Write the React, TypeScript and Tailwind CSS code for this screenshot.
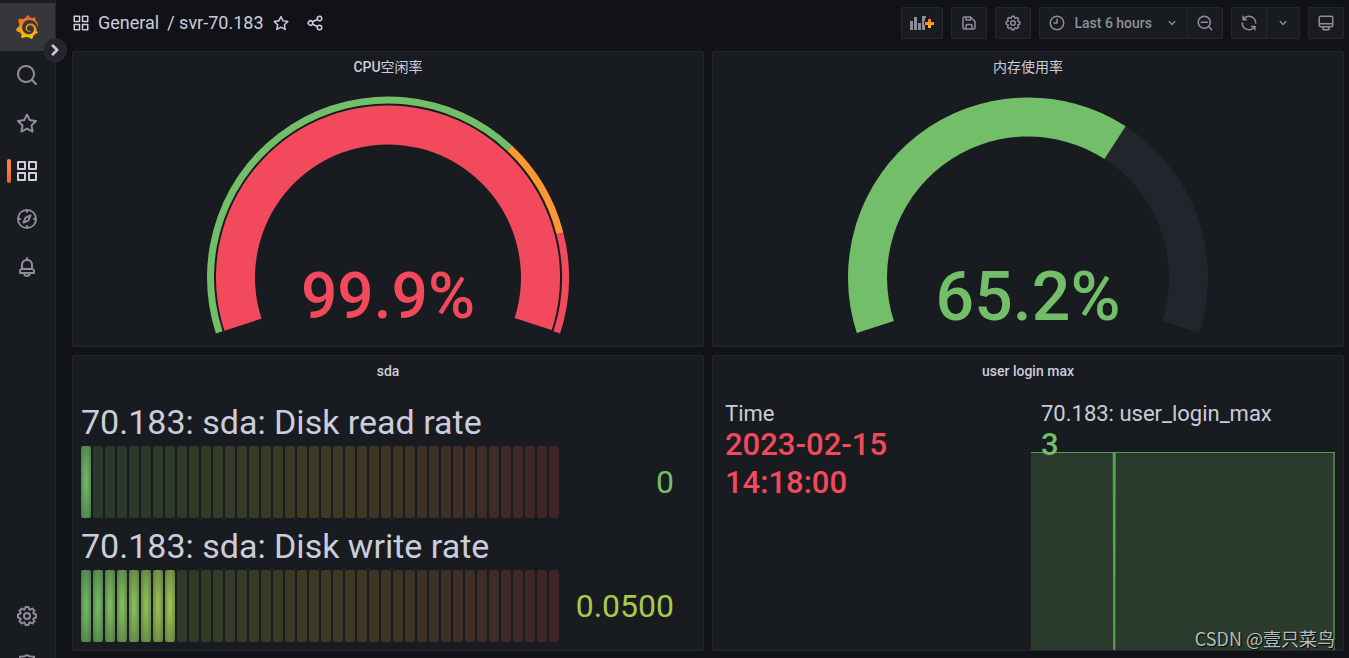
import type { ReactNode } from "react";
import { SiGrafana } from "react-icons/si";

// 24x24 icon outlines
const ICONS = {
  apps: "M10,13H3a1,1,0,0,0-1,1v7a1,1,0,0,0,1,1h7a1,1,0,0,0,1-1V14A1,1,0,0,0,10,13ZM9,20H4V15H9ZM21,2H14a1,1,0,0,0-1,1v7a1,1,0,0,0,1,1h7a1,1,0,0,0,1-1V3A1,1,0,0,0,21,2ZM20,9H15V4h5Zm1,4H14a1,1,0,0,0-1,1v7a1,1,0,0,0,1,1h7a1,1,0,0,0,1-1V14A1,1,0,0,0,21,13Zm-1,7H15V15h5ZM10,2H3A1,1,0,0,0,2,3v7a1,1,0,0,0,1,1h7a1,1,0,0,0,1-1V3A1,1,0,0,0,10,2ZM9,9H4V4H9Z",
  search:
    "M21.71,20.29,18,16.61A9,9,0,1,0,16.61,18l3.68,3.68a1,1,0,0,0,1.42,0A1,1,0,0,0,21.71,20.29ZM11,18a7,7,0,1,1,7-7A7,7,0,0,1,11,18Z",
  searchMinus:
    "M21.71,20.29,18,16.61A9,9,0,1,0,16.61,18l3.68,3.68a1,1,0,0,0,1.42,0A1,1,0,0,0,21.71,20.29ZM11,18a7,7,0,1,1,7-7A7,7,0,0,1,11,18Zm4-8H7a1,1,0,0,0,0,2h8a1,1,0,0,0,0-2Z",
  star: "M22,9.67A1,1,0,0,0,21.14,9l-5.69-.83L12.9,3a1,1,0,0,0-1.8,0L8.55,8.16,2.86,9a1,1,0,0,0-.81.68,1,1,0,0,0,.25,1l4.13,4-1,5.68A1,1,0,0,0,6.9,21.44L12,18.77l5.1,2.67a.93.93,0,0,0,.46.12,1,1,0,0,0,.59-.19,1,1,0,0,0,.4-1l-1-5.68,4.13-4A1,1,0,0,0,22,9.67Zm-6.15,4a1,1,0,0,0-.29.88l.72,4.2-3.76-2a1.06,1.06,0,0,0-.94,0l-3.76,2,.72-4.2a1,1,0,0,0-.29-.88l-3-3,4.21-.61a1,1,0,0,0,.76-.55L12,5.7l1.88,3.82a1,1,0,0,0,.76.55l4.21.61Z",
  compass:
    "M12,2A10,10,0,1,0,22,12,10,10,0,0,0,12,2Zm1,17.93V19a1,1,0,0,0-2,0v.93A8,8,0,0,1,4.07,13H5a1,1,0,0,0,0-2H4.07A8,8,0,0,1,11,4.07V5a1,1,0,0,0,2,0V4.07A8,8,0,0,1,19.93,11H19a1,1,0,0,0,0,2h.93A8,8,0,0,1,13,19.93ZM15.14,7.55l-5,2.12a1,1,0,0,0-.52.52l-2.12,5a1,1,0,0,0,.21,1.1,1,1,0,0,0,.7.3.93.93,0,0,0,.4-.09l5-2.12a1,1,0,0,0,.52-.52l2.12-5a1,1,0,0,0-1.31-1.31Zm-2.49,5.1-2.28,1,1-2.28,2.28-1Z",
  bell: "M18,13.18V10a6,6,0,0,0-5-5.91V3a1,1,0,0,0-2,0V4.09A6,6,0,0,0,6,10v3.18A3,3,0,0,0,4,16v2a1,1,0,0,0,1,1H8.14a4,4,0,0,0,7.72,0H19a1,1,0,0,0,1-1V16A3,3,0,0,0,18,13.18ZM8,10a4,4,0,0,1,8,0v3H8Zm4,10a2,2,0,0,1-1.72-1h3.44A2,2,0,0,1,12,20Zm6-3H6V16a1,1,0,0,1,1-1H17a1,1,0,0,1,1,1Z",
  cog: "M21.32,9.55l-1.89-.63.89-1.78A1,1,0,0,0,20.13,6L18,3.87a1,1,0,0,0-1.15-.19l-1.78.89-.63-1.89A1,1,0,0,0,13.5,2h-3a1,1,0,0,0-.95.68L8.92,4.57,7.14,3.68A1,1,0,0,0,6,3.87L3.87,6a1,1,0,0,0-.19,1.15l.89,1.78-1.89.63A1,1,0,0,0,2,10.5v3a1,1,0,0,0,.68.95l1.89.63-.89,1.78A1,1,0,0,0,3.87,18L6,20.13a1,1,0,0,0,1.15.19l1.78-.89.63,1.89a1,1,0,0,0,.95.68h3a1,1,0,0,0,.95-.68l.63-1.89,1.78.89A1,1,0,0,0,18,20.13L20.13,18a1,1,0,0,0,.19-1.15l-.89-1.78,1.89-.63A1,1,0,0,0,22,13.5v-3A1,1,0,0,0,21.32,9.55ZM20,12.78l-1.2.4A2,2,0,0,0,17.64,16l.57,1.14-1.1,1.1L16,17.64a2,2,0,0,0-2.79,1.16l-.4,1.2H11.22l-.4-1.2A2,2,0,0,0,8,17.64l-1.14.57-1.1-1.1L6.36,16A2,2,0,0,0,5.2,13.18L4,12.78V11.22l1.2-.4A2,2,0,0,0,6.36,8L5.79,6.89l1.1-1.1L8,6.36A2,2,0,0,0,10.82,5.2l.4-1.2h1.56l.4,1.2A2,2,0,0,0,16,6.36l1.14-.57,1.1,1.1L17.64,8a2,2,0,0,0,1.16,2.79l1.2.4ZM12,8a4,4,0,1,0,4,4A4,4,0,0,0,12,8Zm0,6a2,2,0,1,1,2-2A2,2,0,0,1,12,14Z",
  shield:
    "M19.63,3.65a1,1,0,0,0-.84-.2,8,8,0,0,1-6.22-1.27,1,1,0,0,0-1.14,0A8,8,0,0,1,5.21,3.45a1,1,0,0,0-.84.2A1,1,0,0,0,4,4.43v7.45a9,9,0,0,0,3.77,7.33l3.65,2.6a1,1,0,0,0,1.16,0l3.65-2.6A9,9,0,0,0,20,11.88V4.43A1,1,0,0,0,19.63,3.65ZM18,11.88a7,7,0,0,1-2.93,5.7L12,19.77,8.93,17.58A7,7,0,0,1,6,11.88V5.58a10,10,0,0,0,6-1.39,10,10,0,0,0,6,1.39Z",
  share:
    "M18,14a4,4,0,0,0-3.08,1.48l-5.1-2.35a3.64,3.64,0,0,0,0-2.26l5.1-2.35A4,4,0,1,0,14,6a4.17,4.17,0,0,0,.07.71L8.79,9.14a4,4,0,1,0,0,5.72l5.28,2.43A4.17,4.17,0,0,0,14,18a4,4,0,1,0,4-4ZM18,4a2,2,0,1,1-2,2A2,2,0,0,1,18,4ZM6,14a2,2,0,1,1,2-2A2,2,0,0,1,6,14Zm12,6a2,2,0,1,1,2-2A2,2,0,0,1,18,20Z",
  angleDown:
    "M17,9.17a1,1,0,0,0-1.41,0L12,12.71,8.46,9.17a1,1,0,0,0-1.41,0,1,1,0,0,0,0,1.42l4.24,4.24a1,1,0,0,0,1.42,0L17,10.59A1,1,0,0,0,17,9.17Z",
  angleRight:
    "M14.83,11.29,10.59,7.05a1,1,0,0,0-1.42,0,1,1,0,0,0,0,1.41L12.71,12,9.17,15.54a1,1,0,0,0,0,1.41,1,1,0,0,0,.71.29,1,1,0,0,0,.71-.29l4.24-4.24A1,1,0,0,0,14.83,11.29Z",
  clock:
    "M12,2A10,10,0,1,0,22,12,10,10,0,0,0,12,2Zm0,18a8,8,0,1,1,8-8A8,8,0,0,1,12,20ZM12,6a1,1,0,0,0-1,1v4H8a1,1,0,0,0,0,2h4a1,1,0,0,0,1-1V7A1,1,0,0,0,12,6Z",
  sync: "M19.91,15.51H15.38a1,1,0,0,0,0,2h2.4A8,8,0,0,1,4,12a1,1,0,0,0-2,0,10,10,0,0,0,16.88,7.23V21a1,1,0,0,0,2,0V16.5A1,1,0,0,0,19.91,15.51ZM12,2A10,10,0,0,0,5.12,4.77V3a1,1,0,0,0-2,0V7.5a1,1,0,0,0,1,1h4.5a1,1,0,0,0,0-2H6.22A8,8,0,0,1,20,12a1,1,0,0,0,2,0A10,10,0,0,0,12,2Z",
  save: "M20.71,9.29l-6-6a1,1,0,0,0-.32-.21A1.09,1.09,0,0,0,14,3H6A3,3,0,0,0,3,6V18a3,3,0,0,0,3,3H18a3,3,0,0,0,3-3V10A1,1,0,0,0,20.71,9.29ZM9,5h4V7H9Zm6,14H9V16a1,1,0,0,1,1-1h4a1,1,0,0,1,1,1Zm4-1a1,1,0,0,1-1,1H17V16a3,3,0,0,0-3-3H10a3,3,0,0,0-3,3v3H6a1,1,0,0,1-1-1V6A1,1,0,0,1,6,5H7V8A1,1,0,0,0,8,9h6a1,1,0,0,0,1-1V6.41l4,4Z",
  monitor:
    "M19,2H5A3,3,0,0,0,2,5V15a3,3,0,0,0,3,3H7.64l-.58,1a2,2,0,0,0,0,2,2,2,0,0,0,1.75,1h6.46A2,2,0,0,0,17,21a2,2,0,0,0,0-2l-.59-1H19a3,3,0,0,0,3-3V5A3,3,0,0,0,19,2ZM8.77,20,10,18H14l1.2,2ZM20,15a1,1,0,0,1-1,1H5a1,1,0,0,1-1-1V14H20Zm0-3H4V5A1,1,0,0,1,5,4H19a1,1,0,0,1,1,1Z",
};

type IconName = keyof typeof ICONS;

function Icon({ name, className = "size-4" }: { name: IconName; className?: string }) {
  return (
    <svg viewBox="0 0 24 24" fill="currentColor" aria-hidden="true" className={`shrink-0 ${className}`}>
      <path d={ICONS[name]} />
    </svg>
  );
}

function PanelAddIcon() {
  return (
    <svg viewBox="0 0 24 16" aria-hidden="true" className="h-4 w-6 shrink-0">
      <defs>
        <linearGradient id="plus" x1="0" y1="0" x2="0" y2="1">
          <stop offset="0" stopColor="#f2694b" />
          <stop offset="1" stopColor="#fbca0a" />
        </linearGradient>
      </defs>
      <path d="M0 6h3v9H0zM4 2h3v13H4zM8 8h3v7H8zM12 1h4v2h-1v3h-1v4h1v5h-3z" fill="#8e8e99" />
      <path d="M18 4h3v3h3v3h-3v3h-3v-3h-3V7h3z" fill="url(#plus)" />
    </svg>
  );
}

function NavItem({ icon, label, active }: { icon: IconName; label: string; active?: boolean }) {
  return (
    <a
      href="#"
      aria-label={label}
      className={`relative flex h-12 shrink-0 items-center justify-center pr-0.5 ${active ? "text-[#ccccdc]" : "text-[#8e8e99]"}`}
    >
      {active && (
        <span className="absolute top-3 bottom-3 left-[7px] w-1 rounded-sm bg-linear-to-b from-[#ff8833] to-[#f55f3e]" />
      )}
      <Icon name={icon} className="size-6" />
    </a>
  );
}

function Sidebar() {
  return (
    <div className="sticky top-0 z-10 h-screen w-14 shrink-0">
      <nav className="flex h-full flex-col overflow-hidden border-r border-[#24262b] bg-[#181b1f] pt-[3px]">
        <a
          href="#"
          aria-label="Home"
          className="flex h-12 shrink-0 items-center justify-center bg-[#35373b] pr-0.5"
        >
          <svg width="0" height="0" className="absolute">
            <defs>
              <linearGradient id="brand" x1="0" y1="0" x2="0" y2="1">
                <stop offset="0" stopColor="#f05a28" />
                <stop offset="1" stopColor="#fbca0a" />
              </linearGradient>
            </defs>
          </svg>
          <SiGrafana className="size-6" style={{ fill: "url(#brand)" }} />
        </a>
        <NavItem icon="search" label="Search" />
        <NavItem icon="star" label="Starred" />
        <NavItem icon="apps" label="Dashboards" active />
        <NavItem icon="compass" label="Explore" />
        <NavItem icon="bell" label="Alerting" />
        <div className="mt-auto -mb-[30px]">
          <NavItem icon="cog" label="Configuration" />
          <NavItem icon="shield" label="Server admin" />
        </div>
      </nav>
      <button
        aria-label="Expand menu"
        className="absolute top-[38px] -right-[11px] flex size-6 items-center justify-center rounded-full border border-[#2c2e34] bg-[#22252b] text-[#ccccdc]"
      >
        <Icon name="angleRight" className="size-6 stroke-current" />
      </button>
    </div>
  );
}

function ToolButton({ label, className, children }: { label: string; className: string; children: ReactNode }) {
  return (
    <button
      aria-label={label}
      className={`flex h-8 items-center justify-center border border-[#25272c] bg-[#181b1f] text-[#8e8e99] ${className}`}
    >
      {children}
    </button>
  );
}

function Toolbar() {
  return (
    <header className="flex items-center justify-between pt-[7px] pb-3">
      <div className="flex items-center text-lg text-[#ccccdc]">
        <Icon name="apps" className="size-[18px]" />
        <a href="#" className="ml-2">
          General
        </a>
        <a href="#" className="ml-2">
          / svr-70.183
        </a>
        <button aria-label="Mark as favorite" className="ml-2">
          <Icon name="star" className="size-[18px]" />
        </button>
        <button aria-label="Share dashboard" className="ml-4">
          <Icon name="share" className="size-[18px]" />
        </button>
      </div>
      <div className="flex gap-2">
        <ToolButton label="Add panel" className="w-[42px] rounded-xs">
          <PanelAddIcon />
        </ToolButton>
        <ToolButton label="Save dashboard" className="w-9 rounded-xs">
          <Icon name="save" className="size-[18px]" />
        </ToolButton>
        <ToolButton label="Dashboard settings" className="w-9 rounded-xs">
          <Icon name="cog" className="size-[18px]" />
        </ToolButton>
        <div className="flex">
          <ToolButton label="Last 6 hours" className="gap-2 rounded-l-xs pr-[7px] pl-2 text-sm font-medium">
            <Icon name="clock" className="size-[18px]" />
            <span className="pr-1">Last 6 hours</span>
            <Icon name="angleDown" />
          </ToolButton>
          <ToolButton label="Zoom out" className="-ml-px w-9 rounded-r-xs">
            <Icon name="searchMinus" className="size-[18px]" />
          </ToolButton>
        </div>
        <div className="flex">
          <ToolButton label="Refresh" className="w-9 rounded-l-xs">
            <Icon name="sync" className="size-[18px]" />
          </ToolButton>
          <ToolButton label="Refresh interval" className="-ml-px w-[34px] rounded-r-xs">
            <Icon name="angleDown" />
          </ToolButton>
        </div>
        <ToolButton label="Cycle view mode" className="w-9 rounded-xs">
          <Icon name="monitor" className="size-[18px]" />
        </ToolButton>
      </div>
    </header>
  );
}

function Panel({ title, children }: { title: ReactNode; children: ReactNode }) {
  return (
    <section className="relative flex min-w-0 flex-col rounded-xs border border-[#24272c] bg-[#181b1f]">
      <h2 className="text-center text-sm leading-[30px] font-medium text-[#ccccdc]">{title}</h2>
      {children}
    </section>
  );
}

const CX = 315;
const CY = 195.5;

// The dial sweeps 216 degrees, starting 18 degrees below the left horizontal
function arc(from: number, to: number, inner: number, outer: number) {
  const point = (t: number, r: number) => {
    const a = ((198 - t * 216) * Math.PI) / 180;
    return `${(CX + r * Math.cos(a)).toFixed(2)},${(CY - r * Math.sin(a)).toFixed(2)}`;
  };
  const large = (to - from) * 216 > 180 ? 1 : 0;
  return `M${point(from, outer)}A${outer},${outer},0,${large},1,${point(to, outer)}L${point(to, inner)}A${inner},${inner},0,${large},0,${point(from, inner)}Z`;
}

type GaugeProps = {
  value: number;
  color: string;
  inner: number;
  outer: number;
  fontSize: number;
  baseline: number;
  thresholds?: { from: number; to: number; color: string }[];
};

function Gauge({ value, color, inner, outer, fontSize, baseline, thresholds = [] }: GaugeProps) {
  return (
    <div className="min-h-0 flex-1">
      <svg viewBox="0 0 630 264" className="size-full" role="img" aria-label={`${value}%`}>
        <path d={arc(0, 1, inner, outer)} fill="#22252b" />
        <path d={arc(0, value / 100, inner, outer)} fill={color} />
        {thresholds.map((t) => (
          <path key={t.from} d={arc(t.from, t.to, 174, 181)} fill={t.color} />
        ))}
        <text x={CX} y={baseline} textAnchor="middle" fontSize={fontSize} fontWeight={500} fill={color}>
          {value}%
        </text>
      </svg>
    </div>
  );
}

const SCALE = [
  [115, 191, 105],
  [250, 222, 42],
  [242, 73, 92],
];

// Uniform B-spline through the green-yellow-red scale
function scaleColor(t: number) {
  const i = t < 0.5 ? 0 : 1;
  const u = (t - i / 2) * 2;
  return SCALE[0].map((_, ch) => {
    const v1 = SCALE[i][ch];
    const v2 = SCALE[i + 1][ch];
    const v0 = i > 0 ? SCALE[i - 1][ch] : 2 * v1 - v2;
    const v3 = i < 1 ? SCALE[i + 2][ch] : 2 * v2 - v1;
    const sum =
      (1 - 3 * u + 3 * u * u - u ** 3) * v0 +
      (4 - 6 * u * u + 3 * u ** 3) * v1 +
      (1 + 3 * u + 3 * u * u - 3 * u ** 3) * v2 +
      u ** 3 * v3;
    return Math.round(sum / 6);
  }).join(" ");
}

const CELLS = 40;

function RetroBar({ label, value, lit }: { label: string; value: string; lit: number }) {
  return (
    <div className="flex flex-1 flex-col">
      <div className="h-[52px] pt-1 text-[34px] leading-[48px] whitespace-nowrap text-[#ccccdc]">{label}</div>
      <div className="flex flex-1">
        <div className="flex flex-1 gap-0.5">
          {Array.from({ length: CELLS }, (_, i) => {
            const rgb = scaleColor(i / CELLS);
            return (
              <span
                key={i}
                className="flex-1 rounded-xs"
                style={{
                  background:
                    i < lit
                      ? `radial-gradient(rgb(${rgb} / 0.95) 10%, rgb(${rgb} / 0.55))`
                      : `rgb(${rgb} / 0.18)`,
                }}
              />
            );
          })}
        </div>
        <div
          className="flex w-[136px] items-center justify-end pr-[21px] text-[32px]"
          style={{ color: `rgb(${scaleColor(lit > 1 ? lit / CELLS : 0)})` }}
        >
          {value}
        </div>
      </div>
    </div>
  );
}

function LoginStats() {
  return (
    <div className="grid flex-1 grid-cols-2 gap-1.5 px-2 pt-4">
      <div className="pl-1">
        <div className="text-[22px] leading-6 text-[#ccccdc]">Time</div>
        <div className="max-w-[200px] text-[31px] leading-[38px] font-medium text-[#f2495c]">
          2023-02-15 14:18:00
        </div>
      </div>
      <div className="relative pl-2.5">
        <svg
          viewBox="0 0 305 198"
          preserveAspectRatio="none"
          aria-hidden="true"
          className="absolute inset-x-0 top-[50px] bottom-0 h-[198px] w-full"
        >
          <path d="M0 0H305V198H0z" fill="#73bf69" fillOpacity="0.2" />
          <path d="M0 .5H305" stroke="#5c9a56" />
          <path d="M82 0H85L84.500 198H82.500z" fill="#5da057" />
          <path d="M304 0V198" stroke="#6bb362" />
        </svg>
        <div className="relative text-[22px] leading-6 whitespace-nowrap text-[#ccccdc]">
          70.183: user_login_max
        </div>
        <div className="relative text-[31px] leading-[38px] font-medium text-[#73bf69]">3</div>
      </div>
    </div>
  );
}

export default function App() {
  return (
    <div className="flex min-h-screen bg-[#111217] font-[Roboto,'Noto_Sans_CJK_SC',sans-serif]">
      <Sidebar />
      <main className="flex min-w-0 flex-1 flex-col pr-[5px] pb-[7px] pl-4">
        <Toolbar />
        <div className="grid flex-1 grid-cols-2 grid-rows-2 gap-2">
          <Panel
            title={
              <>
                CPU<span className="font-normal">空闲率</span>
              </>
            }
          >
            <Gauge
              value={99.9}
              color="#f2495c"
              inner={133}
              outer={172}
              fontSize={64}
              baseline={236}
              thresholds={[
                { from: 0, to: 0.7, color: "#73bf69" },
                { from: 0.7, to: 0.85, color: "#ff9830" },
                { from: 0.85, to: 1, color: "#f2495c" },
              ]}
            />
          </Panel>
          <Panel title={<span className="font-normal">内存使用率</span>}>
            <Gauge value={65.2} color="#73bf69" inner={141} outer={180} fontSize={68} baseline={238} />
          </Panel>
          <Panel title="sda">
            <div className="flex flex-1 flex-col p-2">
              <RetroBar label="70.183: sda: Disk read rate" value="0" lit={1} />
              <RetroBar label="70.183: sda: Disk write rate" value="0.0500" lit={8} />
            </div>
          </Panel>
          <Panel title="user login max">
            <LoginStats />
            <p className="absolute right-2 bottom-0 font-['Noto_Sans_CJK_SC',sans-serif] text-[18px] leading-6 text-[#b9bcba] [text-shadow:1px_1px_1px_#000]">
              CSDN @壹只菜鸟
            </p>
          </Panel>
        </div>
      </main>
    </div>
  );
}
